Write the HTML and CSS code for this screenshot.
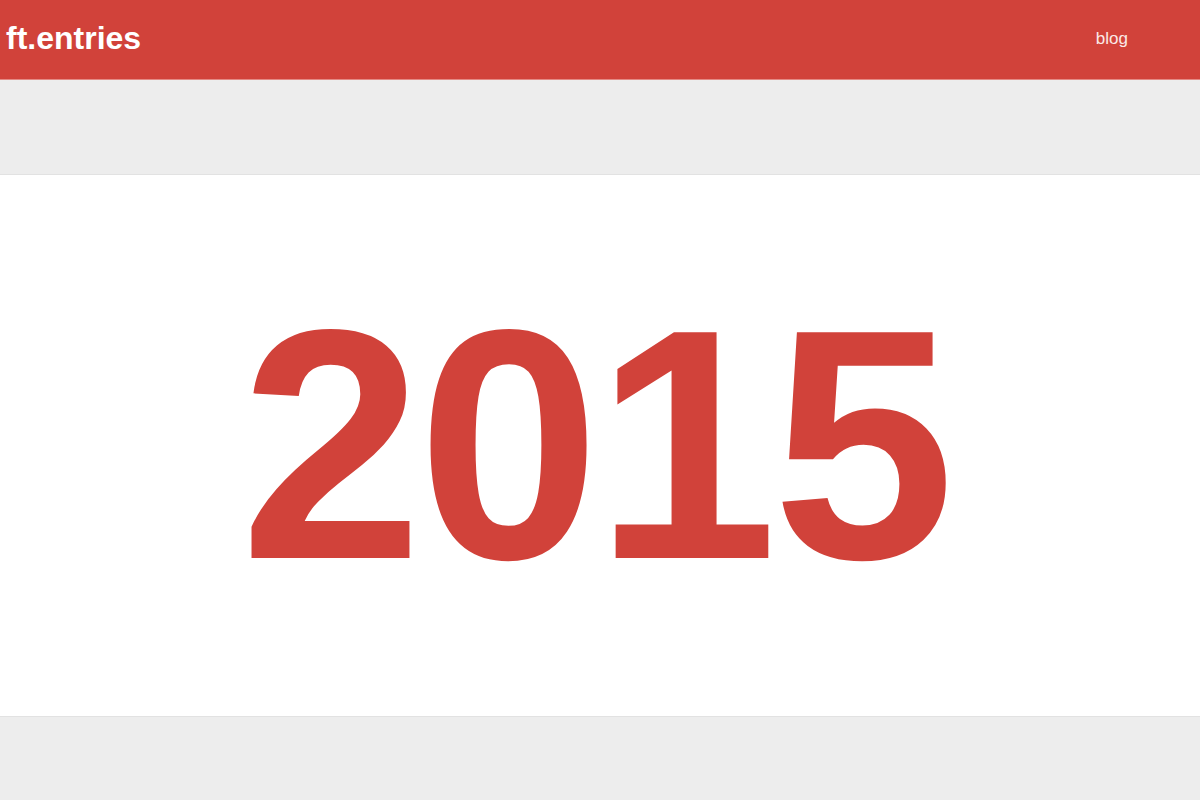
FILE: index.html
```html
<!DOCTYPE html>
<html>
<head>
<meta charset="utf-8">
<link rel="stylesheet" href="styles.css">
</head>
<body>
<header class="topbar">
  <div class="brand">ft.entries</div>
  <nav class="nav"><a class="nav-link" href="#">blog</a></nav>
</header>
<div class="spacer"></div>
<section class="hero">
  <div class="year">2015</div>
</section>
<div class="footer-space"></div>
</body>
</html>
```

FILE: styles.css
```css
html, body {
  margin: 0;
  padding: 0;
  background: #ededed;
  font-family: "Liberation Sans", Arial, sans-serif;
  overflow: hidden;
}
.topbar {
  height: 79px;
  background: #d1423a;
  border-bottom: 1px solid #e48a84;
  display: flex;
  align-items: center;
  justify-content: space-between;
  box-sizing: content-box;
}
.brand {
  color: #fff;
  font-weight: bold;
  font-size: 32px;
  margin-left: 6px;
  margin-top: -2px;
}
.nav {
  margin-right: 72px;
  margin-top: -2px;
}
.nav-link {
  color: #fbe9e7;
  text-decoration: none;
  font-size: 17px;
}
.spacer {
  height: 94px;
}
.hero {
  height: 541px;
  background: #fff;
  border-top: 1px solid #e2e2e2;
  border-bottom: 1px solid #e2e2e2;
  display: flex;
  align-items: center;
  justify-content: center;
}
.year {
  color: #d1423a;
  font-weight: bold;
  font-size: 328px;
  letter-spacing: -5px;
  line-height: 1;
  margin-top: -2px;
  margin-right: 10px;
}
.footer-space {
  height: 100px;
}
```
